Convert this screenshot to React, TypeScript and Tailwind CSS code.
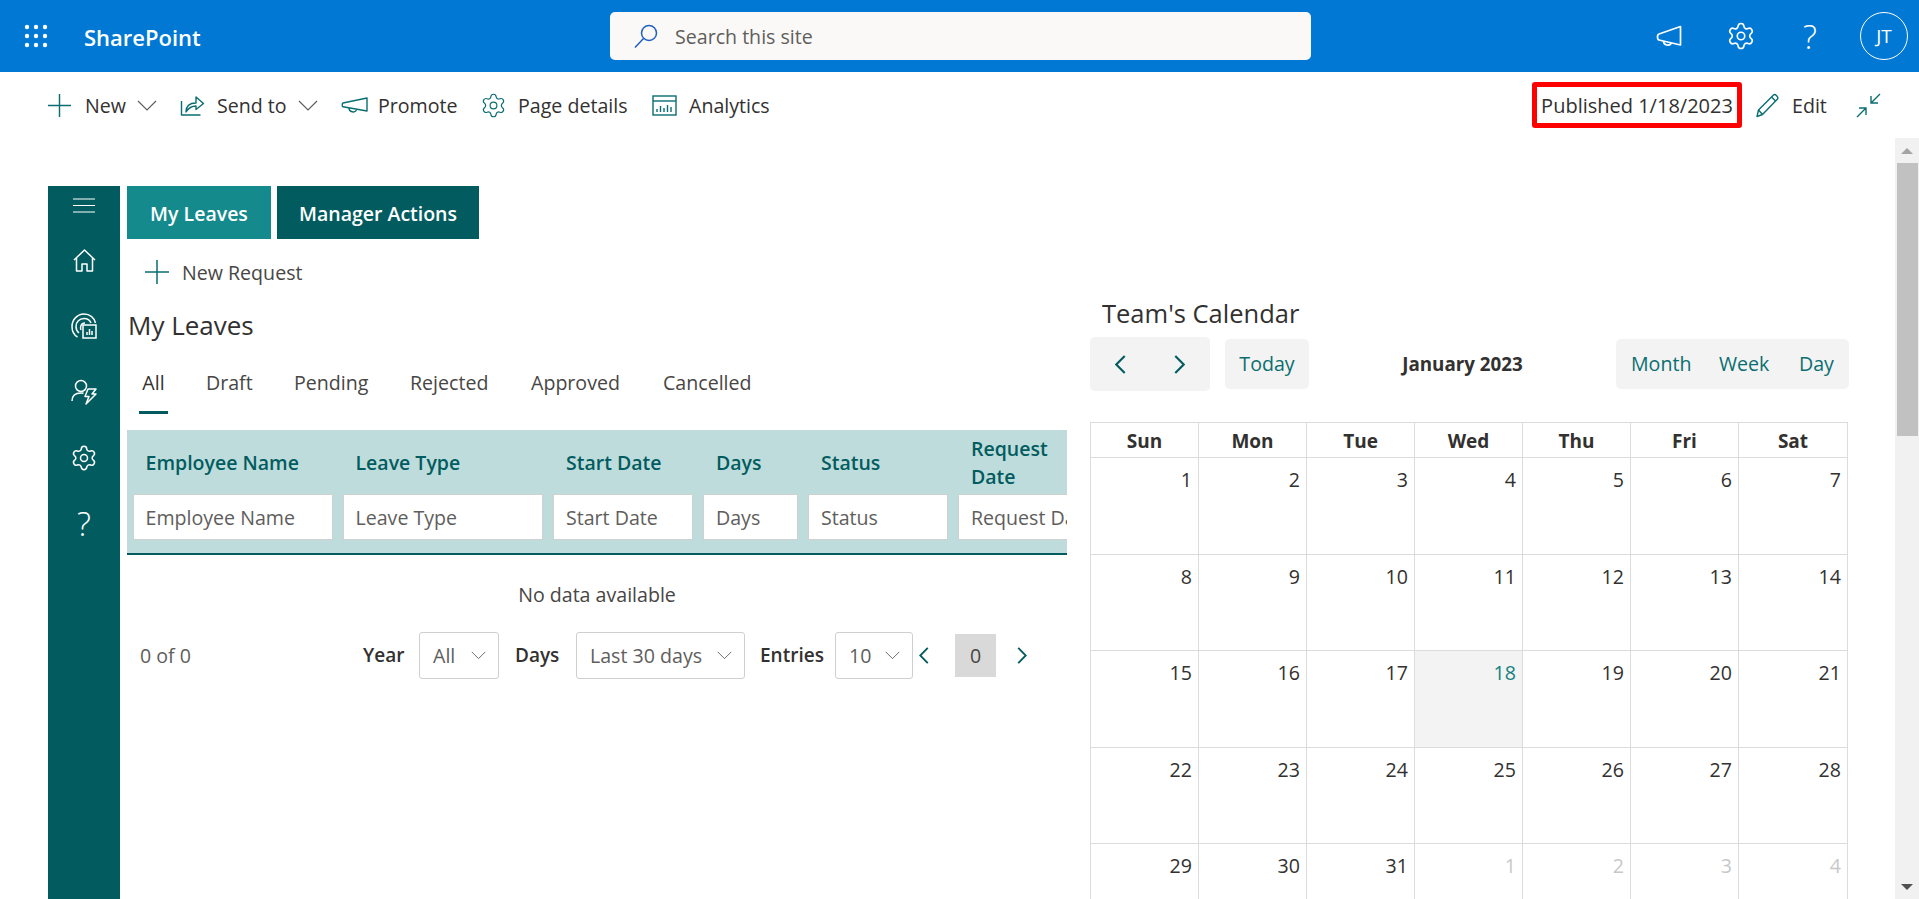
import React from "react";
import { Settings } from "lucide-react";

const TEAL = "#0a6e70";
const DARK = "#025c5f";

const Waffle = () => (
  <svg width="24" height="24" viewBox="0 0 24 24" fill="white">
    {[3, 12, 21].flatMap((y) => [3, 12, 21].map((x) => <circle key={`${x}-${y}`} cx={x} cy={y} r="2.2" />))}
  </svg>
);
const SearchIcon = () => (
  <svg width="26" height="26" viewBox="0 0 26 26" fill="none" stroke="#1f5fbf" strokeWidth="1.5">
    <circle cx="16" cy="10" r="7.5" />
    <path d="M10.5 15.5 2 24.5" />
  </svg>
);
const MegaphoneTop = () => (
  <svg width="26" height="22" viewBox="0 0 26 22" fill="none" stroke="white" strokeWidth="1.7" strokeLinejoin="round">
    <path d="M24.500 1.500v18.500L3 15c-2-.5-2-5.500 0-6Z" />
    <path d="M7.500 16c0 4.500 6 5.500 8 2" />
  </svg>
);
const MegaphoneBar = () => (
  <svg width="27" height="16" viewBox="0 0 27 16" fill="none" stroke={TEAL} strokeWidth="1.4" strokeLinejoin="round">
    <path d="M26 1v13L2 9.800c-1-.3-1-3.500 0-3.800Z" />
    <path d="M8 11c0 4.500 6 5 7.500 2" />
  </svg>
);
const SendIcon = () => (
  <svg width="25" height="21" viewBox="0 0 25 21" fill="none" stroke={TEAL} strokeWidth="1.4" strokeLinejoin="round">
    <path d="M1.500 6v14h19" />
    <path d="M6 17c0-6 4-9 10-9V2l7.500 6.500L16 14.500V11c-4.500 0-7.500 2-10 6Z" />
  </svg>
);
const AnalyticsIcon = () => (
  <svg width="25" height="21" viewBox="0 0 25 21" fill="none" stroke={TEAL} strokeWidth="1.4">
    <rect x="1" y="1" width="23" height="19" />
    <path d="M1 6h23" />
    <path d="M5 17v-3M8.500 17v-6M12 17v-4M15.500 17v-7M19 17v-5" />
  </svg>
);
const Pencil = () => (
  <svg width="25" height="25" viewBox="0 0 25 25" fill="none" stroke={TEAL} strokeWidth="1.4" strokeLinejoin="round">
    <path d="M2 23.500 3.500 17 18.500 2c1.500-1.500 5.500 2 4 4L7.500 21.500Z" />
    <path d="M3.500 17l4 4.500M16.500 4l4 4" />
  </svg>
);
const Collapse = () => (
  <svg width="25" height="25" viewBox="0 0 25 25" fill="none" stroke={TEAL} strokeWidth="1.4">
    <path d="M24 1 15 10M15 3v7h7" />
    <path d="M1 24l9-9M3 15h7v7" />
  </svg>
);
const Hamburger = () => (
  <svg width="22" height="15" viewBox="0 0 22 15" stroke="white" strokeWidth="1.2">
    <path d="M0 1h22M0 7.500h22M0 14h22" />
  </svg>
);
const HomeIcon = () => (
  <svg width="23" height="23" viewBox="0 0 23 23" fill="none" stroke="white" strokeWidth="1.5" strokeLinejoin="round">
    <path d="M1 11 11.500 1 22 11M3.500 9v13h5.500v-7h5v7h5.500V9" />
  </svg>
);
const AnalyticsRound = () => (
  <svg width="26" height="26" viewBox="0 0 26 26" fill="none" stroke="white" strokeWidth="1.5">
    <path d="M6.500 24C3 22 1 18 1 13.500 1 6.500 6.500 1 13 1c6 0 10.500 4 11.500 9" />
    <path d="M8 20c-2-1.500-3-4-3-6.500C5 9 8.500 5.500 13 5.500c3.500 0 6 2 7 4.500" />
    <path d="M10 17c-1-2-.5-7 4-7" />
    <rect x="12" y="12" width="13" height="13" fill={DARK} />
    <path d="M16 22v-3M18.500 22v-6M21 22v-4" />
  </svg>
);
const PersonBolt = () => (
  <svg width="26" height="26" viewBox="0 0 26 26" fill="none" stroke="white" strokeWidth="1.5" strokeLinejoin="round">
    <circle cx="10" cy="7" r="5.500" />
    <path d="M1 22c0-5 3-8 9-8 1 0 2 .1 2.500.3" />
    <path d="M17 10h8l-4 5h4L15 25l3-7.500h-4Z" />
  </svg>
);
const PlusIcon = ({ size }: { size: number }) => (
  <svg width={size} height={size} viewBox="0 0 24 24" fill="none" stroke={TEAL} strokeWidth="1.5">
    <path d="M12 0v24M0 12h24" />
  </svg>
);
const Down = ({ w, color = "#605e5c" }: { w: number; color?: string }) => (
  <svg width={w} height={w / 2 + 1} viewBox="0 0 20 11" fill="none" stroke={color} strokeWidth="1.2" className="shrink-0">
    <path d="M1 1l9 9 9-9" />
  </svg>
);
const Chev = ({ dir, w, h, sw = 2 }: { dir: "l" | "r"; w: number; h: number; sw?: number }) => (
  <svg width={w} height={h} viewBox="0 0 10 18" fill="none" stroke={DARK} strokeWidth={sw} className="shrink-0">
    <path d={dir === "l" ? "M9 1 1 9l8 8" : "M1 1l8 8-8 8"} />
  </svg>
);

const Nav = ({ icon, label, chevron, width }: { icon: React.ReactNode; label: string; chevron?: boolean; width: string }) => (
  <div className={`flex items-center ${width}`}>
    <span className="w-[37px] shrink-0 flex items-center">{icon}</span>
    <span className="pt-[2px]">{label}</span>
    {chevron && <span className="ml-[11px] flex"><Down w={20} /></span>}
  </div>
);

const columns = [
  { name: "Employee Name", w: "w-[210px] pl-[5.500px]", input: "w-[200px]" },
  { name: "Leave Type", w: "w-[210px] pl-[5.500px]", input: "w-[200px]" },
  { name: "Start Date", w: "w-[150px] pl-[6px]", input: "w-[140px]" },
  { name: "Days", w: "w-[105px] pl-[6px]", input: "w-[95px]" },
  { name: "Status", w: "w-[150px] pl-[6px]", input: "w-[140px]" },
  { name: "Request Date", w: "w-[150px] pl-[6px]", input: "w-[140px]" },
];

const Select = ({ value, w }: { value: string; w: string }) => (
  <div className={`${w} h-[47px] shrink-0 border border-[#cfcfcf] rounded-[3px] flex items-center justify-between pl-[13px] pr-[12px] text-[#605e5c]`}>
    <span>{value}</span>
    <Down w={15} />
  </div>
);

const weeks: [number, boolean][][] = [];
for (let w = 0; w < 5; w++) {
  const row: [number, boolean][] = [];
  for (let d = 1; d <= 7; d++) {
    const n = w * 7 + d;
    row.push(n > 31 ? [n - 31, true] : [n, false]);
  }
  weeks.push(row);
}

export default function App() {
  return (
    <div className="w-[1919px] h-[899px] overflow-hidden bg-white flex flex-col text-[19.6px] text-[#323130] leading-none" style={{ fontFamily: '"Open Sans", "Noto Sans", sans-serif' }}>
      {/* Suite bar */}
      <header className="h-[72px] shrink-0 bg-[#0078d4] flex items-center text-white">
        <div className="w-[84px] pl-[24px] flex"><Waffle /></div>
        <div className="w-[526px] font-semibold text-[22px] pt-[2px]">SharePoint</div>
        <div className="w-[701px] h-[48px] bg-[#faf9f8] rounded-[5px] flex items-center pl-[23px] text-[#605e5c]">
          <SearchIcon />
          <span className="ml-[16px] pt-[2px]">Search this site</span>
        </div>
        <div className="flex-1 flex items-center pl-[345px]">
          <span className="w-[70px] flex"><MegaphoneTop /></span>
          <span className="w-[77px] flex"><Settings size={30} strokeWidth={1.3} /></span>
          <span className="w-[57px] text-[33px] font-light">?</span>
          <span className="w-[48px] h-[48px] rounded-full border border-white flex items-center justify-center text-[19px]">JT</span>
        </div>
      </header>

      {/* Command bar */}
      <div className="h-[66px] shrink-0 flex items-center pl-[48px]">
        <Nav icon={<PlusIcon size={23} />} label="New" chevron width="w-[132px]" />
        <Nav icon={<SendIcon />} label="Send to" chevron width="w-[161px]" />
        <Nav icon={<MegaphoneBar />} label="Promote" width="w-[140px]" />
        <Nav icon={<Settings size={27} strokeWidth={1.05} color={TEAL} className="-ml-[1px]" />} label="Page details" width="w-[171px]" />
        <Nav icon={<AnalyticsIcon />} label="Analytics" width="w-[200px]" />
        <div className="ml-auto flex items-center">
          <div className="w-[210px] h-[46px] border-[5px] border-[#ff0000] rounded-[3px] flex items-center justify-center mr-[13px] whitespace-nowrap text-[20px] pt-[2px]">Published 1/18/2023</div>
          <span className="flex mr-[12px]"><Pencil /></span>
          <span className="w-[64px] pt-[2px]">Edit</span>
          <span className="flex mr-[38px]"><Collapse /></span>
        </div>
      </div>

      {/* Body */}
      <div className="flex-1 min-h-0 flex">
        <div className="flex-1 min-w-0 pt-[48px] pl-[48px] flex">
          {/* Rail */}
          <aside className="w-[72px] shrink-0 bg-[#025c5f] flex flex-col items-center text-white">
            <div className="h-[39px] flex items-center"><Hamburger /></div>
            <div className="mt-[2px] h-[66px] flex items-center"><HomeIcon /></div>
            <div className="h-[66px] flex items-center"><AnalyticsRound /></div>
            <div className="h-[66px] flex items-center"><PersonBolt /></div>
            <div className="h-[66px] flex items-center"><Settings size={28} strokeWidth={1.3} /></div>
            <div className="h-[64px] flex items-center text-[33px] font-light">?</div>
          </aside>

          {/* Left panel */}
          <section className="ml-[7px] w-[940px] shrink-0">
            <div className="flex h-[53px] gap-[6px] text-white font-semibold text-[19.500px]">
              <div className="w-[144px] bg-[#148a8c] flex items-center justify-center pt-[2px]">My Leaves</div>
              <div className="w-[202px] bg-[#025c5f] flex items-center justify-center pt-[2px]">Manager Actions</div>
            </div>
            <div className="h-[66px] flex items-center pl-[18px] text-[#484644]">
              <PlusIcon size={24} />
              <span className="ml-[13px] pt-[2px]">New Request</span>
            </div>
            <div className="h-[40px] flex items-center pl-[1px] text-[26px] font-medium">My Leaves</div>
            <div className="h-[85px] flex pl-[12px] pt-[28px] text-[#484644]">
              <div className="w-[67px]"><div className="w-[29px] flex justify-center pb-[18px] border-b-[3px] border-[#025c5f] text-[#323130] font-medium">All</div></div>
              <span className="w-[88px]">Draft</span>
              <span className="w-[116px]">Pending</span>
              <span className="w-[121px]">Rejected</span>
              <span className="w-[132px]">Approved</span>
              <span>Cancelled</span>
            </div>
            <div className="h-[125px] bg-[#bfdcdc] border-b-2 border-[#025c5f] overflow-hidden flex">
              {columns.map((c) => (
                <div key={c.name} className={`${c.w} shrink-0`}>
                  <div className="h-[64px] flex items-center pl-[13px] pr-[20px] pt-[2px] font-semibold text-[#025c5f] text-[19.500px] leading-[28px]">{c.name}</div>
                  <div className={`${c.input} h-[46px] bg-white border border-[#d0d0d0] flex items-center pl-[12px] pt-[2px] text-[#605e5c] whitespace-nowrap overflow-hidden`}>{c.name}</div>
                </div>
              ))}
            </div>
            <div className="h-[78px] flex items-center justify-center pt-[2px] text-[#484644]">No data available</div>
            <div className="flex items-center pl-[13px] h-[47px] mt-[-1px]">
              <span className="w-[223px] text-[#605e5c]">0 of 0</span>
              <span className="w-[56px] font-semibold text-[19px] whitespace-nowrap">Year</span>
              <Select value="All" w="w-[80px]" />
              <span className="w-[77px] pl-[16px] font-semibold text-[19px]">Days</span>
              <Select value="Last 30 days" w="w-[169px]" />
              <span className="w-[90px] pl-[15px] font-semibold text-[19px]">Entries</span>
              <Select value="10" w="w-[78px]" />
              <span className="ml-[6px] flex"><Chev dir="l" w={10} h={17} /></span>
              <span className="ml-[26px] w-[41px] h-[43px] bg-[#d9d9d9] flex items-center justify-center text-[#484644]">0</span>
              <span className="ml-[21px] flex"><Chev dir="r" w={10} h={17} /></span>
            </div>
          </section>

          {/* Calendar */}
          <section className="ml-[23px] w-[759px] shrink-0">
            <div className="mt-[107px] h-[40px] flex items-center pl-[12px] pt-[2px] text-[25.500px] font-medium">Team's Calendar</div>
            <div className="mt-[4px] h-[54px] flex items-center">
              <div className="w-[120px] h-[54px] bg-[#f3f3f3] rounded-[5px] flex items-center justify-between pl-[25px] pr-[25px]">
                <Chev dir="l" w={11} h={19} />
                <Chev dir="r" w={11} h={19} />
              </div>
              <div className="ml-[15px] w-[84px] h-[50px] bg-[#f3f3f3] rounded-[5px] flex items-center justify-center" style={{ color: TEAL }}>Today</div>
              <div className="flex-1 text-center font-bold text-[18.800px] pt-[1px]">January 2023</div>
              <div className="w-[233px] h-[50px] bg-[#f3f3f3] rounded-[5px] flex items-center pl-[15px]" style={{ color: TEAL }}>
                <span className="w-[88px]">Month</span>
                <span className="w-[80px]">Week</span>
                <span>Day</span>
              </div>
            </div>
            <div className="mt-[31px] border-l border-t border-[#dcdcdc] w-[758px] grid grid-cols-[108px_108px_108px_108px_108px_108px_109px]">
              {["Sun", "Mon", "Tue", "Wed", "Thu", "Fri", "Sat"].map((d) => (
                <div key={d} className="h-[35px] border-r border-b border-[#dcdcdc] flex items-center justify-center pt-[3px] font-bold text-[19px]">{d}</div>
              ))}
              {weeks.flat().map(([n, muted], i) => (
                <div
                  key={i}
                  className={`h-[96.5px] border-r border-b border-[#dcdcdc] text-right pr-[6px] pt-[12px] ${n === 18 && !muted ? "bg-[#f3f3f3] text-[#148080]" : muted ? "text-[#c8c8c8]" : ""}`}
                >
                  {n}
                </div>
              ))}
            </div>
          </section>
        </div>

        {/* Scrollbar */}
        <div className="w-[24px] shrink-0 bg-[#f1f1f1] flex flex-col items-center">
          <div className="h-[25px] flex items-center justify-center">
            <div className="w-0 h-0 border-x-[6px] border-x-transparent border-b-[6px] border-b-[#a3a3a3]" />
          </div>
          <div className="w-[21px] h-[273px] bg-[#c1c1c1]" />
          <div className="mt-auto h-[24px] flex items-center justify-center">
            <div className="w-0 h-0 border-x-[6px] border-x-transparent border-t-[6px] border-t-[#505050]" />
          </div>
        </div>
      </div>
    </div>
  );
}
